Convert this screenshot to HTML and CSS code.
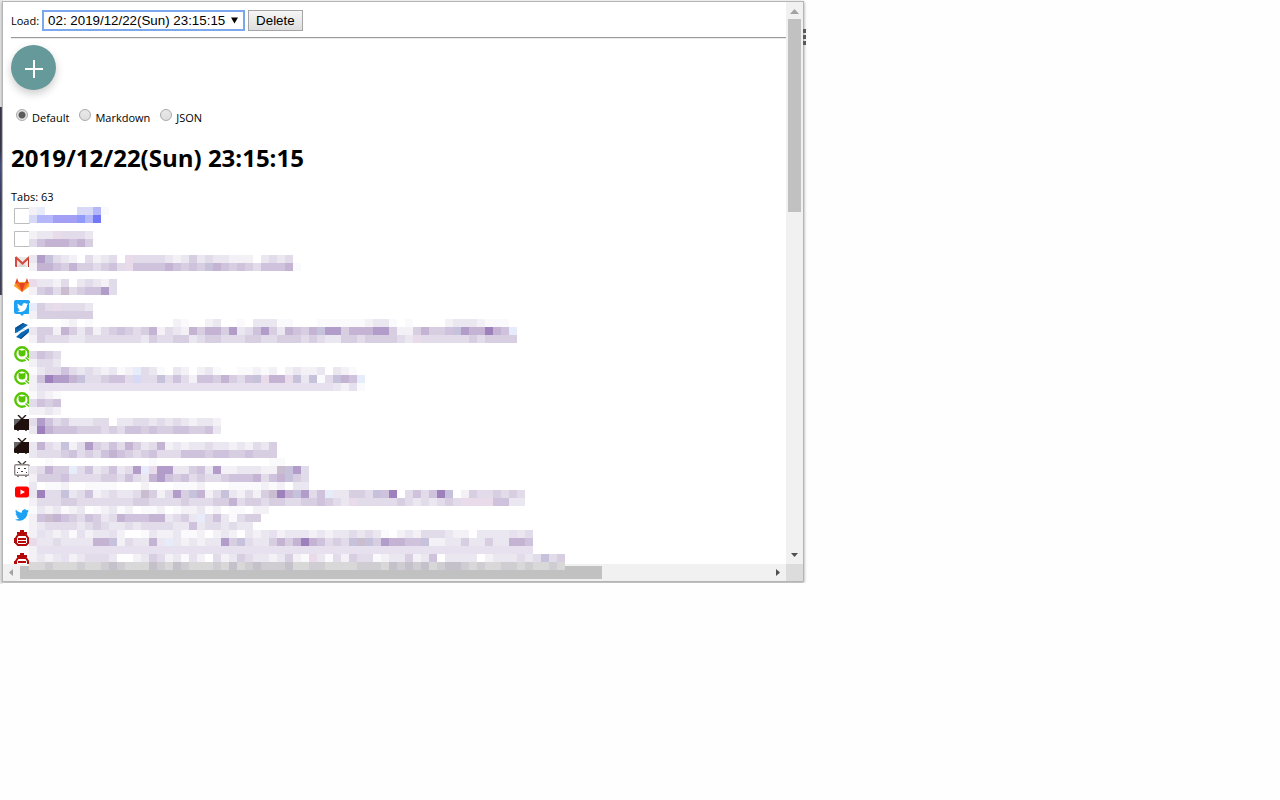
FILE: index.html
```html
<!DOCTYPE html>
<html lang="en">
<head>
<meta charset="utf-8">
<title>Saved tabs</title>
<link rel="stylesheet" href="styles.css">
</head>
<body>
<svg class="defs" aria-hidden="true">
  <symbol id="blank" viewBox="0 0 16 16"><path d="M.5.5h15v15H.5z" fill="#fff" stroke="#bdbdbd"/></symbol>
  <symbol id="gmail" viewBox="0 0 16 16"><path d="M2 3h12v10H2z" fill="#eceae9"/><path d="M3 13l5-5 5 5z" fill="#dad8d7"/><path d="M1 3h2v10H2q-1 0-1-1z" fill="#d54b3d"/><path d="M14 3h2v9q0 1-1 1h-1z" fill="#b63224"/><path d="M1.500 3L8.500 9.500 15.500 3" fill="none" stroke="#d54b3d" stroke-width="2.200"/></symbol>
  <symbol id="gitlab" viewBox="0 0 16 16"><path d="M8 15L0 9l1.500-4h13L16 9z" fill="#fca326"/><path d="M8 15L1.300 6h13.400z" fill="#fc6d26"/><path d="M8 15L5 6h6z" fill="#e24329"/><path d="M1.300 6L3 1l2 5zM14.700 6L13 1l-2 5z" fill="#e24329"/></symbol>
  <symbol id="bird" viewBox="0 0 24 24"><path d="M23.950 4.570a10 10 0 0 1-2.820.770 4.960 4.960 0 0 0 2.160-2.720 9.900 9.900 0 0 1-3.120 1.180 4.920 4.920 0 0 0-8.380 4.480C7.690 8.090 4.070 6.130 1.640 3.160a4.820 4.820 0 0 0-.670 2.480c0 1.710.870 3.210 2.190 4.100a4.900 4.900 0 0 1-2.230-.620v.060a4.920 4.920 0 0 0 3.950 4.830 5 5 0 0 1-2.210.080 4.940 4.940 0 0 0 4.600 3.420A9.870 9.870 0 0 1 0 19.540a13.990 13.990 0 0 0 7.550 2.210c9.050 0 14-7.500 14-13.980 0-.210 0-.420-.020-.630a9.940 9.940 0 0 0 2.420-2.570z"/></symbol>
  <symbol id="tweetdeck" viewBox="0 0 16 16"><path d="M2 0h12q2 0 2 2v10q0 2-2 2h-4l-2 2-2-2H2q-2 0-2-2V2q0-2 2-2z" fill="#1da1f2"/><use href="#bird" x="3" y="2" width="11" height="11" fill="#fff"/></symbol>
  <symbol id="slash" viewBox="0 0 16 16"><path d="M1 5l8-5 5 2-5 3.500L7 7l8-1.500V9l-8 7-5-2 5-4.500L9 8.500 1 10z" fill="#0b68b3"/><path d="M7 7l7-1.500-5 3L2 10z" fill="#fff"/><path d="M1 5l8-5 1 1-6 5zM15 9l-8 7-1-1 6-5z" fill="#07508f"/></symbol>
  <symbol id="qiita" viewBox="0 0 16 16"><circle cx="8" cy="8" r="6.700" fill="none" stroke="#55c500" stroke-width="2.400"/><path d="M4.500 3.500L7 4.500h2l2.500-1L11.500 7a3.500 3.500 0 0 1-7 0z" fill="#55c500"/><path d="M11 11.500l4.500 3.500" stroke="#fff" stroke-width="3"/><path d="M11.500 11.500l3.500 3" stroke="#55c500" stroke-width="1.500"/></symbol>
  <symbol id="tv" viewBox="0 0 16 16"><path d="M4 0l4 4 4-4M4 14v2M12 14v2" fill="none" stroke="#231815" stroke-width="1.400"/><rect y="4" width="16" height="11" rx="1" fill="#1f0f0d"/><path d="M0 5q0-1 1-1h6l-7 7z" fill="#666"/></symbol>
  <symbol id="tvface" viewBox="0 0 16 16"><path d="M4 0l4 4 4-4M4 14v2M12 14v2" fill="none" stroke="#403a38" stroke-width="1.300"/><rect x=".7" y="3.700" width="14.600" height="10.600" rx="1.500" fill="#fff" stroke="#8b8583" stroke-width="1.400"/><path d="M4 7h2v1H4zM10 7h2v1h-2zM7 10h2v1H7zM3 11h1v1H3zM12 11h1v1h-1z" fill="#403a38"/></symbol>
  <symbol id="youtube" viewBox="0 0 16 16"><rect x="1" y="2.500" width="14" height="11" rx="2.500" fill="#f00"/><path d="M6.500 5.500v5L11 8z" fill="#fff"/></symbol>
  <symbol id="robot" viewBox="0 0 16 16"><path d="M6 0h4v2h3v2H3V2h3z" fill="#b50a0a"/><path d="M4 5h8l2 3v5l-2 2H4l-2-2V8z" fill="none" stroke="#b50a0a" stroke-width="2"/><path d="M0 8h2v5H0zM14 8h2v5h-2zM4 8h8v2H4zM4 11h8v2H4z" fill="#b50a0a"/></symbol>
</svg>

<div class="page-edge" aria-hidden="true"></div>
<div class="popup">
  <main class="content">
    <div class="toolbar">
      <label for="saved">Load:</label>
      <span class="picker">
        <select id="saved"><option>02: 2019/12/22(Sun) 23:15:15</option></select>
        <svg viewBox="0 0 8 7" aria-hidden="true"><path d="M0 0h8L4 7z"/></svg>
      </span>
      <button class="delete" type="button">Delete</button>
    </div>
    <hr>
    <button class="add" type="button" aria-label="Add"><svg viewBox="0 0 20 20" aria-hidden="true"><path d="M10 1v18M1 10h18" stroke="#fff" stroke-width="2"/></svg></button>
    <div class="formats">
      <label><input type="radio" name="format" checked>Default</label>
      <label><input type="radio" name="format">Markdown</label>
      <label><input type="radio" name="format">JSON</label>
    </div>
    <h1>2019/12/22(Sun) 23:15:15</h1>
    <p class="count">Tabs: 63</p>
    <ul class="tabs">
      <li><svg><use href="#blank"/></svg></li>
      <li><svg><use href="#blank"/></svg></li>
      <li><svg><use href="#gmail"/></svg></li>
      <li><svg><use href="#gitlab"/></svg></li>
      <li><svg><use href="#tweetdeck"/></svg></li>
      <li><svg><use href="#slash"/></svg></li>
      <li><svg><use href="#qiita"/></svg></li>
      <li><svg><use href="#qiita"/></svg></li>
      <li><svg><use href="#qiita"/></svg></li>
      <li><svg><use href="#tv"/></svg></li>
      <li><svg><use href="#tv"/></svg></li>
      <li><svg><use href="#tvface"/></svg></li>
      <li><svg><use href="#youtube"/></svg></li>
      <li><svg fill="#1da1f2"><use href="#bird" x="1" y="1" width="14" height="14"/></svg></li>
      <li><svg><use href="#robot"/></svg></li>
      <li><svg><use href="#robot"/></svg></li>
    </ul>
  </main>
  <div class="vbar" aria-hidden="true">
    <svg viewBox="0 0 17 17"><path d="M4 12h9L8.500 7z" fill="#a3a3a3"/></svg>
    <div class="thumb"></div>
    <svg class="end" viewBox="0 0 17 17"><path d="M5 6h7l-3.500 4z" fill="#505050"/></svg>
  </div>
  <div class="hbar" aria-hidden="true">
    <svg viewBox="0 0 17 17"><path d="M10 5v7L6 8.500z" fill="#a3a3a3"/></svg>
    <div class="thumb"></div>
    <svg class="end" viewBox="0 0 17 17"><path d="M7 5v7l4-3.500z" fill="#505050"/></svg>
  </div>
  <div class="corner"></div>
  <div class="menu-dots" aria-hidden="true"><i></i><i></i><i></i></div>
  <svg class="mosaic" id="mosaic" shape-rendering="crispEdges" aria-hidden="true"></svg>
</div>
<script src="mosaic.js"></script>
</body>
</html>
```
FILE: styles.css
```css
body {
  margin: 0;
  background: #fefefe;
  color: #000;
  font: 11px/16px "Open Sans", "Noto Sans", sans-serif;
}

.defs {
  position: absolute;
  width: 0;
  height: 0;
}

.page-edge {
  position: absolute;
  top: 0;
  left: 0;
  width: 3px;
  height: 584px;
  background: linear-gradient(#e9e9e9 107px, #211f38 107px, #20213c 150px, #343b75 165px, #23274d 205px, #303764 240px, #292b43 295px, #e9e9e9 295px);
}

.menu-dots {
  position: absolute;
  top: 27px;
  right: -3px;
  display: grid;
  gap: 2px;
}

.menu-dots i {
  width: 3px;
  height: 4px;
  background: #5a5a5a;
}

.popup {
  position: relative;
  display: grid;
  grid-template: minmax(0, 1fr) 17px / minmax(0, 1fr) 17px;
  box-sizing: border-box;
  max-width: 800px;
  max-height: 579px;
  margin: 2px 3px;
  background: #fff;
  box-shadow: 0 0 0 1px #b5b5b5, 0 1px 3px 1px #999;
}

.content {
  overflow: hidden;
  padding: 8px 0 0 8px;
}

.toolbar {
  display: flex;
  align-items: center;
  gap: 3px;
}

.picker {
  position: relative;
}

.picker select {
  display: block;
  appearance: none;
  width: 203px;
  height: 21px;
  padding: 0 4px;
  border: 2px solid #7ba7ed;
  border-radius: 0;
  outline: 0;
  background: #fff;
  color: #000;
  font-family: "Liberation Sans", Arial, sans-serif;
}

.picker svg {
  position: absolute;
  top: 7px;
  right: 7px;
  width: 7px;
  height: 7px;
}

.delete {
  height: 21px;
  padding: 0 7px;
  border: 1px solid #a5a5a5;
  border-radius: 0;
  background: linear-gradient(#f6f6f6, #dedede);
  color: #000;
  font-family: "Liberation Sans", Arial, sans-serif;
}

hr {
  height: 1px;
  margin: 6px 0;
  border: 0;
  border-top: 1px solid #9a9a9a;
  background: #ededed;
}

.add {
  display: grid;
  place-items: center;
  width: 45px;
  height: 45px;
  padding: 3px 0 0;
  border: 0;
  border-radius: 50%;
  background: #669999;
  box-shadow: 0 4px 8px rgba(0, 0, 0, .2);
}

.add svg {
  width: 20px;
  height: 20px;
}

.formats {
  display: flex;
  gap: 10px;
  margin: 19px 0 0 5px;
}

.formats label {
  display: flex;
  align-items: flex-start;
  gap: 4px;
  line-height: 18px;
}

.formats input {
  appearance: none;
  width: 12px;
  height: 12px;
  margin: 0;
  border: 1px solid #a9a9a9;
  border-radius: 50%;
  background: linear-gradient(#e9e9e9, #dedede);
}

.formats input:checked {
  background: radial-gradient(circle, #5b5b5b 3px, #e4e4e4 4px);
}

h1 {
  margin: 15px 0;
  font-size: 24px;
  line-height: 32px;
}

.count {
  margin: 0;
  line-height: 15px;
}

.tabs {
  margin: 0;
  padding: 0 3px;
  list-style: none;
}

.tabs li {
  display: flex;
  align-items: center;
  height: 23px;
}

.tabs svg {
  width: 16px;
  height: 16px;
}

.vbar,
.hbar {
  display: flex;
  background: #f1f1f1;
}

.vbar {
  flex-direction: column;
  align-items: center;
}

.hbar {
  align-items: center;
}

.vbar svg,
.hbar svg {
  flex: none;
  width: 17px;
  height: 17px;
}

.thumb {
  background: #c1c1c1;
}

.vbar .thumb {
  width: 13px;
  height: 193px;
}

.hbar .thumb {
  width: 582px;
  height: 13px;
}

.vbar .end {
  margin-top: auto;
}

.hbar .end {
  margin-left: auto;
}

.corner {
  background: #dcdcdc;
}

.mosaic {
  position: absolute;
  top: 205px;
  left: 26px;
  width: 544px;
  height: 368px;
}
```
FILE: mosaic.js
```
const CELL = 8;

const COLORS = {
  a: "#fafafc", b: "#f3f1f5", c: "#ebe7f0", d: "#e2dbe9", e: "#d8cee1",
  f: "#cfc2dc", g: "#c5b3d4", h: "#b29cca", i: "#9d80bc", k: "#e7e1ef",
  p: "#e9dbe9", q: "#cbbdd0", s: "#c6c2dc", w: "#ffffff",
  1: "#e7ecfb", 2: "#d7d9f7", 3: "#b5b7fb", 4: "#a29ff4", 5: "#8f9afa", 6: "#7277f7",
  x: "#d8d8d8", y: "#cfcdd2", z: "#c5c1cb"
};

// Each entry: top of the strip, one letter per cell, and optionally the cell count.
const STRIPS = [
  [0, "b1....223a"],
  [8, "233444536"],
  [24, "bccpdddc"],
  [32, "dfgggfge"],
  [48, "chsdcb.dbcd.pddddcbcecdccbbb.cdcd"],
  [56, "bggfegeedefdpffffgfefesgfefedfffga"],
  [72, "pccbd.cdcbd"],
  [80, "befdqdeffhd"],
  [96, "1edpdddc"],
  [104, "beeeeeee"],
  [112, "....ab.a..........ba..bc..a.cccaa...aaaaaabcca.a....bcccbaaa"],
  [120, "ceebgecebdefedegbdcbgeggehcdfhecgfegshheggghhebbegeefshggigf1"],
  [128, "bedddccdddddddceddeecdeedddeeddeeededcceedeeeedcpddddddedeeeeca", 61],
  [144, "dfed"],
  [152, "bddc"],
  [160, "acddfdcdcbcab1dca.cb.bca..aabab.bcbbc.cba"],
  [168, "bfihhgsddeffd2ddsdfdbffegedfspggpscsadsgf1"],
  [176, "bkkkkkkkkkkkkkkkkkkkkkkkkkkkkkkkkkkkkkcbka"],
  [184, "acba"],
  [192, "dfef"],
  [200, "bbcb"],
  [211, "dhfdecccdd.ccddcdcdcbccb"],
  [219, "cigfffeeededffefeeffeefc"],
  [235, "cgdcsbdhedfdgecdgbcbccdccbcbdce"],
  [243, "cdddefdedfgfedefdddfffeffeefeee"],
  [251, "..a............a..............aa"],
  [259, "cdgee1dfcdfcdh1phhccefchbbcccbbqshd"],
  [267, "beeefddddeedfdcghfefdeddefffgdfgsed"],
  [275, "c.aab..aaaa...b...aaab...aaaabab.cc"],
  [283, "ciddscdfbcdccdqebdhesgbdscbdbeqigshdf1cceedsfi.dfdfis.beddeded"],
  [291, "bdddeedddddddeeddddedddeegdeedeeddeefedcpdddddedcdcdedppppffccddddd", 62],
  [299, "acbcabc.abcab.aab.abbcab.aa.bb"],
  [307, "bfqgfedfecdgfffggcdec1dfcadeefsc", 29],
  [315, "bcddddcdedccdcddddccfcddcdcc"],
  [323, "bkcbcakbcckb..acbbcaab.bcb.cbckbcccbcbccdcdca.bcbdddcbb.cccckcddd", 63],
  [331, "pccdccccggsbdccgc1cbcbcchesdccegegigfdedsqsehggffsbbccecceccggf"],
  [339, "bkkkkkkkkkkkkkkkkkkkkkkkkkkkkkkkkkkkkkkkkkkkkkkkkkkkkkkkkkkkkkkkk", 63],
  [347, "bcbckbcdddcw.bcedbcakbwdbcedccbcebapcadbeddabccebcf.ccccwbcccdcdsde"],
  [355, "xxyxxxyxxyzyxxxzyxzyxxxyxzxyzyyyzxxyyxxxxyyyxzyzyzxyzzyxyxxyyxyxxyx"]
];

const mosaic = document.getElementById("mosaic");
for (const [top, cells, count] of STRIPS) {
  [...cells].slice(0, count).forEach((letter, column) => {
    const color = COLORS[letter];
    if (!color) return;
    const rect = document.createElementNS("http://www.w3.org/2000/svg", "rect");
    rect.setAttribute("x", column * CELL);
    rect.setAttribute("y", top);
    rect.setAttribute("width", CELL);
    rect.setAttribute("height", CELL);
    rect.setAttribute("fill", color);
    mosaic.append(rect);
  });
}
```
